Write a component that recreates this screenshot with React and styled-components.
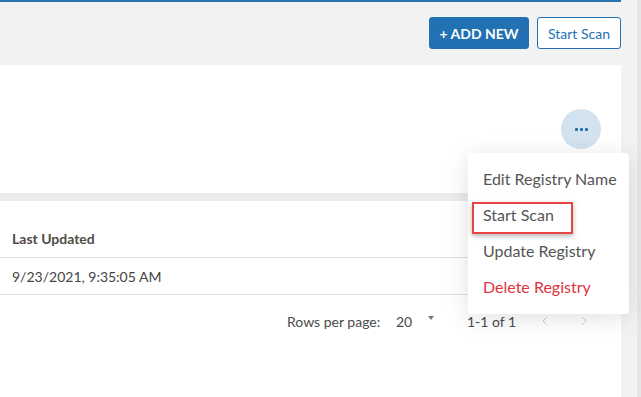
import React from 'react';
import styled, { createGlobalStyle } from 'styled-components';

const GlobalStyle = createGlobalStyle`
    html, body {
        margin: 0;
        padding: 0;
        background: #f2f2f2;
        font-family: Lato, "Open Sans", sans-serif;
        overflow: hidden;
    }
`;

const Page = styled.div`
    display: flex;
    width: 641px;
    height: 397px;
    position: relative;
`;

const Main = styled.div`
    flex: 0 0 621px;
    display: flex;
    flex-direction: column;
`;

const Gutter = styled.div`
    flex: 1;
`;

const Track = styled.div`
    flex: 0 0 4px;
    background: #e6e6e6;
`;

const TopBar = styled.div`
    height: 65px;
    box-sizing: border-box;
    border-top: 2px solid #2a73b5;
    display: flex;
    justify-content: flex-end;
    align-items: flex-start;
    padding-top: 15px;
    gap: 8px;
`;

const Button = styled.button`
    height: 32px;
    box-sizing: border-box;
    border-radius: 3px;
    font-family: Lato, sans-serif;
    font-size: 14px;
    cursor: pointer;
    border: 1px solid #2271b3;
    background: ${props => props.primary ? "#2271b3" : "#fff"};
    color: ${props => props.primary ? "#fff" : "#2271b3"};
    font-weight: ${props => props.primary ? "700" : "400"};
    width: ${props => props.primary ? "100px" : "84px"};
    padding: 0;
`;

const Panel = styled.div`
    flex: 1;
    background: #fff;
    display: flex;
    flex-direction: column;
`;

const PanelHead = styled.div`
    height: 128px;
    box-sizing: border-box;
    display: flex;
    justify-content: flex-end;
    padding: 44px 20px 0 0;
`;

const DotsButton = styled.div`
    width: 40px;
    height: 40px;
    border-radius: 50%;
    background: #d3e2ef;
    display: flex;
    align-items: center;
    justify-content: center;
    gap: 2px;
`;

const Dot = styled.span`
    width: 3px;
    height: 3px;
    border-radius: 1px;
    background: #2271b3;
`;

const Divider = styled.div`
    height: 8px;
    background: #ececec;
`;

const HeadRow = styled.div`
    height: 57px;
    box-sizing: border-box;
    display: flex;
    align-items: flex-end;
    padding: 0 0 10px 12px;
    border-bottom: 1px solid #e0e0e0;
    font-size: 14px;
    line-height: 17px;
    font-weight: 700;
    color: #514a45;
`;

const DataRow = styled.div`
    height: 37px;
    box-sizing: border-box;
    display: flex;
    align-items: center;
    padding-left: 12px;
    border-bottom: 1px solid #e0e0e0;
    font-size: 14px;
    color: #444;
`;

const Pager = styled.div`
    height: 52px;
    display: flex;
    align-items: center;
    font-size: 14px;
    color: #4a4a4a;
    padding-left: 287px;
`;

const PagerLabel = styled.span`
    width: 109px;
`;

const PageSize = styled.span`
    width: 32px;
`;

const Caret = styled.span`
    width: 0;
    height: 0;
    border-left: 3.5px solid transparent;
    border-right: 3.5px solid transparent;
    border-top: 4px solid #777;
    margin: -6px 33px 0 0;
`;

const PageCount = styled.span`
    width: 75px;
`;

const Arrow = styled.svg`
    width: 6px;
    height: 10px;
    margin-right: ${props => props.gap || "0"};
`;

const Menu = styled.div`
    position: absolute;
    left: 468px;
    top: 153px;
    width: 161px;
    box-sizing: border-box;
    padding: 7px 0 10px;
    background: #fff;
    border-radius: 4px;
    box-shadow: 0 4px 24px rgba(0, 0, 0, 0.12);
`;

const MenuItem = styled.div`
    height: 36px;
    display: flex;
    align-items: center;
    padding-left: 15px;
    font-size: 16px;
    white-space: nowrap;
    color: ${props => props.danger ? "#e0323f" : "#555"};
`;

const Highlight = styled.div`
    position: absolute;
    left: 4px;
    top: 49px;
    width: 101px;
    height: 32px;
    box-sizing: border-box;
    border: 2px solid #e84545;
    box-shadow: 0 2px 5px rgba(0, 0, 0, 0.3);
`;

const Chevron = ({ dir, gap }) => (
    <Arrow viewBox="0 0 6 10" gap={gap}>
        <path
            d={dir === "left" ? "M5 1 L1 5 L5 9" : "M1 1 L5 5 L1 9"}
            fill="none"
            stroke="#cfcfcf"
            strokeWidth="1"
        />
    </Arrow>
);

const menuItems = ["Edit Registry Name", "Start Scan", "Update Registry"];

const App = () => {
    return (
        <Page>
            <GlobalStyle />
            <Main>
                <TopBar>
                    <Button primary>+ ADD NEW</Button>
                    <Button>Start Scan</Button>
                </TopBar>
                <Panel>
                    <PanelHead>
                        <DotsButton>
                            <Dot />
                            <Dot />
                            <Dot />
                        </DotsButton>
                    </PanelHead>
                    <Divider />
                    <HeadRow>Last Updated</HeadRow>
                    <DataRow>9/23/2021, 9:35:05 AM</DataRow>
                    <Pager>
                        <PagerLabel>Rows per page:</PagerLabel>
                        <PageSize>20</PageSize>
                        <Caret />
                        <PageCount>1-1 of 1</PageCount>
                        <Chevron dir="left" gap="33px" />
                        <Chevron dir="right" />
                    </Pager>
                </Panel>
            </Main>
            <Gutter />
            <Track />
            <Menu>
                {menuItems.map(item => (
                    <MenuItem key={item}>{item}</MenuItem>
                ))}
                <MenuItem danger>Delete Registry</MenuItem>
                <Highlight />
            </Menu>
        </Page>
    );
};

export default App;
